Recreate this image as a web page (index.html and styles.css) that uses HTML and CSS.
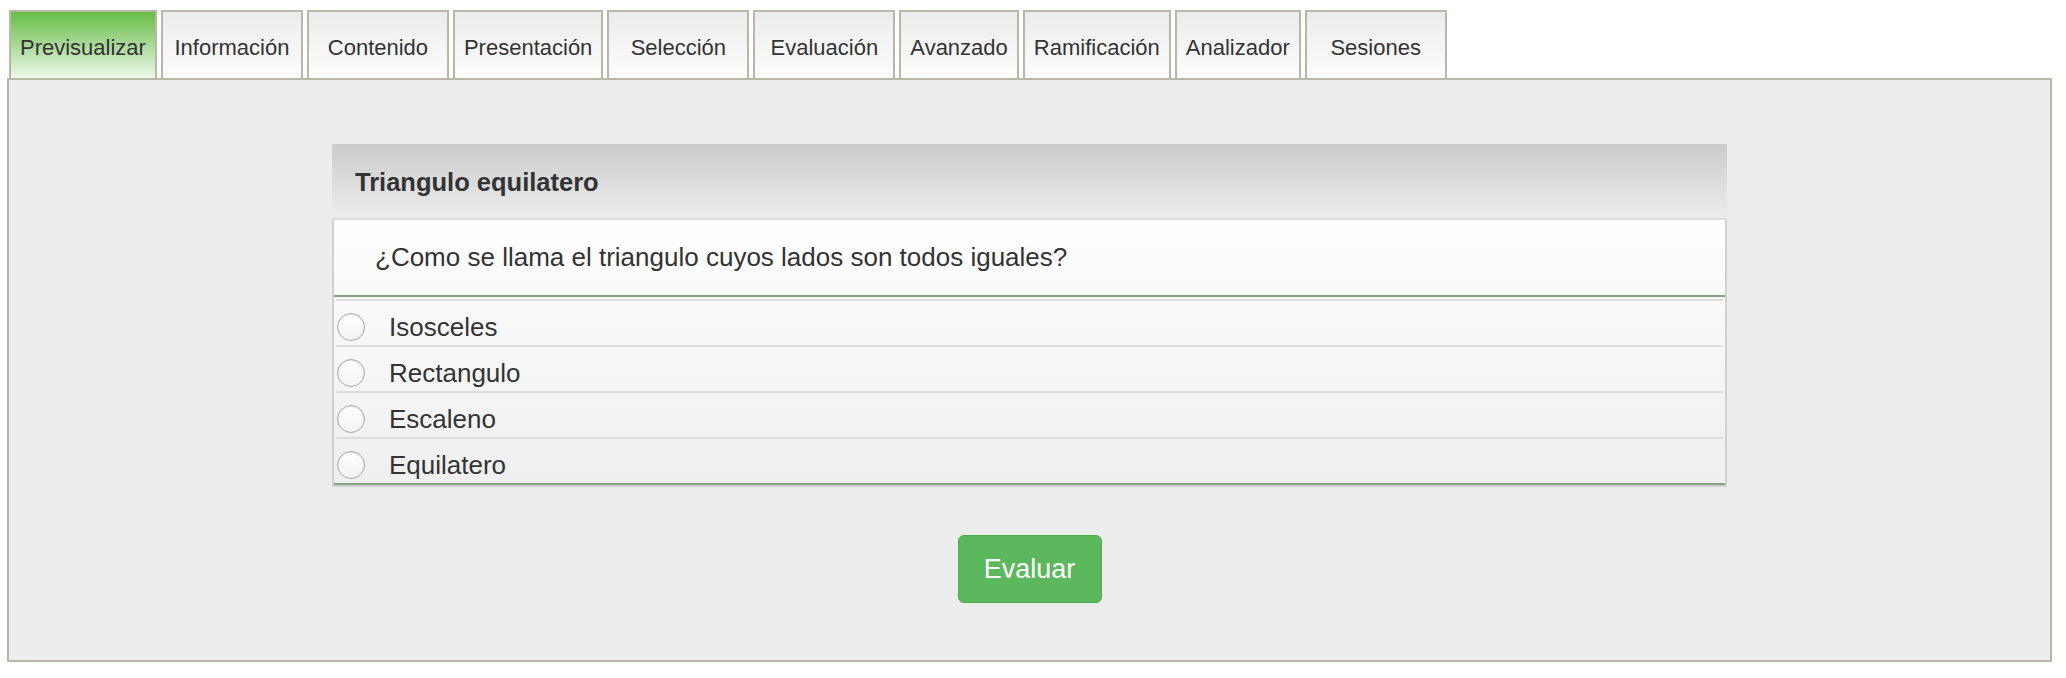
FILE: index.html
```html
<!DOCTYPE html>
<html lang="es">
<head>
<meta charset="utf-8">
<title>Previsualizar</title>
<link rel="stylesheet" href="styles.css">
</head>
<body>
<div class="page">
  <nav class="tabs">
    <a class="tab active">Previsualizar</a>
    <a class="tab tab-wide">Información</a>
    <a class="tab tab-wide">Contenido</a>
    <a class="tab">Presentación</a>
    <a class="tab tab-wide">Selección</a>
    <a class="tab tab-wide">Evaluación</a>
    <a class="tab">Avanzado</a>
    <a class="tab">Ramificación</a>
    <a class="tab">Analizador</a>
    <a class="tab tab-wide">Sesiones</a>
  </nav>
  <section class="panel">
    <div class="card">
      <div class="card-header">Triangulo equilatero</div>
      <div class="question">¿Como se llama el triangulo cuyos lados son todos iguales?</div>
      <div class="options">
        <label class="option"><input type="radio" name="q1" class="radio"><span>Isosceles</span></label>
        <label class="option"><input type="radio" name="q1" class="radio"><span>Rectangulo</span></label>
        <label class="option"><input type="radio" name="q1" class="radio"><span>Escaleno</span></label>
        <label class="option"><input type="radio" name="q1" class="radio"><span>Equilatero</span></label>
      </div>
    </div>
    <div class="actions">
      <button class="btn-evaluar" type="button">Evaluar</button>
    </div>
  </section>
</div>
</body>
</html>
```
FILE: styles.css
```css
* { box-sizing: border-box; }
html, body { margin: 0; padding: 0; background: #fff; }
body {
  font-family: "Liberation Sans", Arial, Helvetica, sans-serif;
  color: #333;
}
.page {
  margin: 10px 14px 0 7px;
}
.tabs {
  display: flex;
  gap: 4px;
  padding-left: 2px;
  height: 68px;
}
.tab {
  display: block;
  height: 68px;
  padding: 23px 9px 0;
  border: 2px solid #b9b8a7;
  border-bottom: none;
  background: linear-gradient(to bottom, #ebebeb, #fdfdfd);
  font-size: 22px;
  line-height: 26px;
  text-align: center;
  color: #333;
  white-space: nowrap;
}
.tab-wide {
  min-width: 142px;
}
.tab.active {
  background: linear-gradient(to bottom, #68be46 0%, #a3d690 45%, #eef8ea 100%);
}
.panel {
  border: 2px solid #b9b8a7;
  background: #ededed;
  height: 584px;
  padding-top: 64px;
}
.card {
  width: 1395px;
  margin: 0 auto;
  border: 2px solid #d0d0d0;
  border-top: none;
  background: #fff;
}
.card-header {
  margin: 0 -2px;
  height: 76px;
  padding: 2px 23px 0;
  display: flex;
  align-items: center;
  background: linear-gradient(to bottom, #cbcbcb, #ededed);
  border-bottom: 2px solid #dddddd;
  font-size: 25.5px;
  font-weight: bold;
  color: #333;
}
.question {
  height: 77px;
  padding: 0 41px;
  display: flex;
  align-items: center;
  background: linear-gradient(to bottom, #ffffff, #f9f9f9);
  border-bottom: 2px solid #86a086;
  font-size: 26px;
  color: #333;
}
.options {
  padding-top: 2px;
  background: linear-gradient(to bottom, #fafafa, #efefef);
  border-bottom: 2px solid #86a086;
}
.option {
  display: flex;
  align-items: center;
  margin: 0 2px;
  height: 46px;
  padding-top: 8px;
  border-top: 2px solid #dcdcdc;
  font-size: 26px;
  color: #333;
}
.radio {
  appearance: none;
  -webkit-appearance: none;
  margin: 0 24px 0 1px;
  width: 28px;
  height: 28px;
  border-radius: 50%;
  border: 1px solid #a9a9a9;
  background: linear-gradient(to bottom, #ffffff, #f3f3f3);
  box-shadow: inset 0 1px 2px rgba(0,0,0,0.12);
  flex: none;
}
.actions {
  display: flex;
  justify-content: center;
  margin-top: 48px;
}
.btn-evaluar {
  width: 144px;
  height: 68px;
  border: 1px solid #4cae4c;
  border-radius: 6px;
  background: #5cb85c;
  color: #fff;
  font-family: "Liberation Sans", Arial, Helvetica, sans-serif;
  font-size: 27px;
  padding: 0;
}
```
